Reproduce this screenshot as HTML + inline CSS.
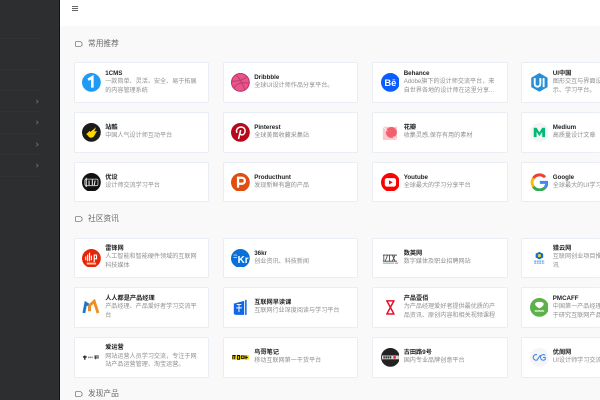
<!DOCTYPE html>
<html lang="zh"><head><meta charset="utf-8"><title>WebStack</title>
<style>
html,body{margin:0;padding:0;width:600px;height:400px;overflow:hidden;background:#f9f9f9}
body{font-family:"Liberation Sans","Noto Sans CJK SC",sans-serif}
#page{position:absolute;left:0;top:0;width:600px;height:400px;overflow:hidden;contain:paint}
#side{position:absolute;left:0;top:0;width:58.5px;height:400px;background:#2c2e2f;border-right:1px solid #141414}
#side i{position:absolute;left:0;width:40px;height:1px;background:#313334}
#side b{position:absolute;left:35px;width:2.2px;height:2.2px;border-top:.7px solid #666;border-right:.7px solid #666;transform:rotate(45deg)}
#head{position:absolute;left:59.5px;top:0;width:541px;height:26px;background:#fff}
#head i{position:absolute;left:12.5px;width:6px;height:.9px;background:#666}
.h{position:absolute;left:88px;font-size:7.7px;line-height:10px;color:#666;white-space:nowrap;filter:blur(.25px)}
.tag{position:absolute;left:75px;width:7.5px;height:6px}
.c{position:absolute;width:133.6px;height:38.6px;background:#fff;border:.7px solid #e9eef5;border-radius:1.5px;overflow:hidden}
.e{width:78px;border-right:0}
.ic{position:absolute;left:7.4px;top:10px;width:18.8px;height:18.8px;filter:blur(.25px)}
.t{position:absolute;left:30.5px;top:0;height:38.6px;display:flex;flex-direction:column;justify-content:center;white-space:nowrap;filter:blur(.28px)}
.t b{font-size:6.2px;line-height:8.2px;color:#1e2022;font-weight:bold}
.t span{font-size:6.1px;line-height:8.7px;color:#8f9090}
</style></head><body>
<div id="page">
<div id="side">
<i style="top:38px"></i><i style="top:69px"></i><i style="top:90px"></i><i style="top:111px"></i><i style="top:132.5px"></i><i style="top:154px"></i><i style="top:175.5px"></i>
<b style="top:99.5px"></b><b style="top:121px"></b><b style="top:142.5px"></b><b style="top:164px"></b>
</div>
<div id="head"><i style="top:5.6px"></i><i style="top:8px"></i><i style="top:10.4px"></i></div>

<svg class="tag" style="top:40.5px" viewBox="0 0 8 6"><path d="M1 .5H6L7.5 2V4.5L6 5.5H1A.7.7 0 0 1 .4 5V1A.7.7 0 0 1 1 .5Z" fill="none" stroke="#666" stroke-width=".7"/></svg>
<div class="h" style="top:38.5px">常用推荐</div>
<svg class="tag" style="top:215.5px" viewBox="0 0 8 6"><path d="M1 .5H6L7.5 2V4.5L6 5.5H1A.7.7 0 0 1 .4 5V1A.7.7 0 0 1 1 .5Z" fill="none" stroke="#666" stroke-width=".7"/></svg>
<div class="h" style="top:213.7px">社区资讯</div>
<svg class="tag" style="top:390.5px" viewBox="0 0 8 6"><path d="M1 .5H6L7.5 2V4.5L6 5.5H1A.7.7 0 0 1 .4 5V1A.7.7 0 0 1 1 .5Z" fill="none" stroke="#666" stroke-width=".7"/></svg>
<div class="h" style="top:388.5px">发现产品</div>

<!-- row 1 -->
<div class="c" style="left:73.7px;top:62.3px"><svg class="ic" viewBox="0 0 20 20"><circle cx="10" cy="10" r="10" fill="#1e9bf5"/><path d="M6.5 7.2L11 4.5V15.5" fill="none" stroke="#fff" stroke-width="2.8"/></svg><div class="t"><b>1CMS</b><span>一款简单、灵活、安全、易于拓展<br>的内容管理系统</span></div></div>
<div class="c" style="left:222.7px;top:62.3px"><svg class="ic" viewBox="0 0 20 20"><circle cx="10" cy="10" r="10" fill="#e5568a"/><circle cx="10" cy="10" r="9.4" fill="none" stroke="#c0306a" stroke-width="1"/><path d="M6 2.5C10 7 13 12 14.5 18M1 8.5C7 9 13 7.5 16.5 4M3 16C6 11 12 9.5 19.5 11" fill="none" stroke="#b8306a" stroke-width=".8"/></svg><div class="t"><b>Dribbble</b><span>全球UI设计师作品分享平台。</span></div></div>
<div class="c" style="left:372.2px;top:62.3px"><svg class="ic" viewBox="0 0 20 20"><circle cx="10" cy="10" r="10" fill="#0b5cff"/><text x="10" y="13.6" text-anchor="middle" font-size="10" font-weight="bold" fill="#fff" font-family="Liberation Sans">Bē</text></svg><div class="t"><b>Behance</b><span>Adobe旗下的设计师交流平台，来<br>自世界各地的设计师在这里分享...</span></div></div>
<div class="c e" style="left:521.3px;top:62.3px"><svg class="ic" viewBox="0 0 20 20"><path d="M10 0L18.7 5V15L10 20L1.3 15V5Z" fill="#2a8ed6"/><path d="M5 5.5V11.5C5 15.5 11 15.5 11 11.5V5.5M14.5 5.5V15" fill="none" stroke="#fff" stroke-width="2"/></svg><div class="t"><b>UI中国</b><span>图形交互与界面设计交流、作品展<br>示、学习平台。</span></div></div>

<!-- row 2 -->
<div class="c" style="left:73.7px;top:112px"><svg class="ic" viewBox="0 0 20 20"><circle cx="10" cy="10" r="10" fill="#1c1c1c"/><path d="M4.5 12L8 8.5L9 9.5L15 4.5L13 9L16 8.5L12.5 14.5C10 16.5 7 15.5 6.5 13.5Z" fill="#ffd800"/></svg><div class="t"><b>站酷</b><span>中国人气设计师互动平台</span></div></div>
<div class="c" style="left:222.7px;top:112px"><svg class="ic" viewBox="0 0 20 20"><circle cx="10" cy="10" r="10" fill="#b7081b"/><path d="M6.3 10.5C4.7 6.5 8 4.2 10.6 4.2C13.5 4.2 15.2 6.2 15 8.7C14.8 11.5 13 13 11.2 12.6C10.2 12.4 9.7 11.8 9.5 11.2M10.3 7.5L8 17" fill="none" stroke="#fff" stroke-width="1.6"/></svg><div class="t"><b>Pinterest</b><span>全球美图收藏采集站</span></div></div>
<div class="c" style="left:372.2px;top:112px"><svg class="ic" viewBox="0 0 20 20"><rect x="2" y="4" width="15" height="14" fill="#fbc9cd"/><circle cx="11" cy="10" r="5.8" fill="#f0606f"/><path d="M2 4L7 9M17 18L13 14" stroke="#fff" stroke-width=".6"/></svg><div class="t"><b>花瓣</b><span>收集灵感,保存有用的素材</span></div></div>
<div class="c e" style="left:521.3px;top:112px"><svg class="ic" viewBox="0 0 20 20"><circle cx="10" cy="10" r="10" fill="#f4f4f4"/><path d="M4 5H7L10 10L13 5H16V15H13V9.5L10 14L7 9.5V15H4Z" fill="#02b875"/></svg><div class="t"><b>Medium</b><span>高质量设计文章</span></div></div>

<!-- row 3 -->
<div class="c" style="left:73.7px;top:161.7px"><svg class="ic" viewBox="0 0 20 20"><circle cx="10" cy="10" r="10" fill="#111"/><rect x="3" y="6.5" width="14" height="7" rx="1.5" fill="none" stroke="#ddd" stroke-width=".8"/><path d="M4.5 5V15M7.5 8V13M11 7V13M14 8L13 13" stroke="#eee" stroke-width="1.1"/></svg><div class="t"><b>优设</b><span>设计师交流学习平台</span></div></div>
<div class="c" style="left:222.7px;top:161.7px"><svg class="ic" viewBox="0 0 20 20"><circle cx="10" cy="10" r="10" fill="#df4d0f"/><path d="M7.5 15.5V5H11.5A3.2 3.2 0 0 1 11.5 11.5H7.5" fill="none" stroke="#fff" stroke-width="2.4"/></svg><div class="t"><b>Producthunt</b><span>发现新鲜有趣的产品</span></div></div>
<div class="c" style="left:372.2px;top:161.7px"><svg class="ic" viewBox="0 0 20 20"><circle cx="10" cy="10" r="10" fill="#f00"/><rect x="4" y="5.5" width="12" height="9" rx="2.2" fill="#fff"/><path d="M8.5 7.7V12.3L12.5 10Z" fill="#f00"/></svg><div class="t"><b>Youtube</b><span>全球最大的学习分享平台</span></div></div>
<div class="c e" style="left:521.3px;top:161.7px"><svg class="ic" viewBox="0 0 20 20"><path d="M3.6 5.5A8 8 0 0 1 16 4.5" fill="none" stroke="#ea4335" stroke-width="3.2"/><path d="M3.6 5.5A8 8 0 0 0 3.6 14.5" fill="none" stroke="#fbbc05" stroke-width="3.2"/><path d="M3.6 14.5A8 8 0 0 0 16 15.5" fill="none" stroke="#34a853" stroke-width="3.2"/><path d="M16 15.5A8 8 0 0 0 18 10H10.5" fill="none" stroke="#4285f4" stroke-width="3.2"/></svg><div class="t"><b>Google</b><span>全球最大的UI学习分享平台</span></div></div>

<!-- row 4 -->
<div class="c" style="left:73.7px;top:237.7px"><svg class="ic" viewBox="0 0 20 20"><circle cx="10" cy="10" r="10" fill="#e6240b"/><path d="M4 8V12M6 6V13M8 4V13M10 7V12M13 6V14M13 6.5H15.5V10.5H13" fill="none" stroke="#fff" stroke-width="1.2"/><rect x="5" y="14.5" width="10" height="2" fill="#ffc9a8"/></svg><div class="t"><b>雷锋网</b><span>人工智能和智能硬件领域的互联网<br>科技媒体</span></div></div>
<div class="c" style="left:222.7px;top:237.7px"><svg class="ic" viewBox="0 0 20 20"><circle cx="10" cy="10" r="10" fill="#0a6fd6"/><text x="7" y="15" font-size="10.5" font-weight="bold" fill="#fff" font-family="Liberation Sans">Kr</text><path d="M2.8 6.5H6.5M2.8 9H6.5" stroke="#cde" stroke-width=".9"/></svg><div class="t"><b>36kr</b><span>创业资讯、科技新闻</span></div></div>
<div class="c" style="left:372.2px;top:237.7px"><svg class="ic" viewBox="0 0 20 20"><path d="M2 6.5H17M2 13H17M3 6.5V13M7 6.5L4.5 13M9 6.5V13M12 6.5L15 13M15 6.5L12 13" fill="none" stroke="#444" stroke-width=".9"/><path d="M2 15H14" stroke="#888" stroke-width=".9"/><path d="M15 15H18" stroke="#e5366e" stroke-width=".9"/></svg><div class="t"><b>数英网</b><span>数字媒体及职业招聘网站</span></div></div>
<div class="c e" style="left:521.3px;top:237.7px"><svg class="ic" viewBox="0 0 20 20"><path d="M10 3L14 5V9L10 11L6 9V5Z" fill="#0b6fd1"/><circle cx="10" cy="7" r="1.7" fill="#f8c91c"/><path d="M4.5 13H15.5M4.5 15H15.5" stroke="#6aa9e6" stroke-width="1.4" stroke-dasharray="2 .7"/></svg><div class="t"><b>猎云网</b><span>互联网创业项目推荐和创业创新资<br>讯</span></div></div>

<!-- row 5 -->
<div class="c" style="left:73.7px;top:287.3px"><svg class="ic" viewBox="0 0 20 20"><path d="M2 16L4 5.5L8 8L8 14" fill="none" stroke="#1b77c9" stroke-width="3"/><path d="M8 14V8L13 3.5L17 16" fill="none" stroke="#f28c1e" stroke-width="3"/></svg><div class="t"><b>人人都是产品经理</b><span>产品经理、产品爱好者学习交流平<br>台</span></div></div>
<div class="c" style="left:222.7px;top:287.3px"><svg class="ic" viewBox="0 0 20 20"><path d="M3 6L14 3V18H5L3 17Z" fill="#0f66e8"/><rect x="15" y="2" width="1.6" height="16" fill="#0f66e8"/><path d="M6 7H11M8.5 7V15M5.5 10.5H11.5" stroke="#fff" stroke-width="1"/></svg><div class="t"><b>互联网早读课</b><span>互联网行业深度阅读与学习平台</span></div></div>
<div class="c" style="left:372.2px;top:287.3px"><svg class="ic" viewBox="0 0 20 20"><path d="M5.5 3H14.5M5.5 17H14.5M6.5 3.5L13.5 16.5M13.5 3.5L6.5 16.5" fill="none" stroke="#e8112d" stroke-width="1.6"/></svg><div class="t"><b>产品壹佰</b><span>为产品经理爱好者提供最优质的产<br>品资讯、原创内容和相关视频课程</span></div></div>
<div class="c e" style="left:521.3px;top:287.3px"><svg class="ic" viewBox="0 0 20 20"><circle cx="10" cy="10" r="10" fill="#5db14a"/><path d="M10 11C6 9 4.5 6.5 6 5C7.5 3.8 12.5 3.8 14 5C15.5 6.5 14 9 10 11Z" fill="#fff"/><rect x="5" y="13" width="10" height="1.6" fill="#d8efd0"/></svg><div class="t"><b>PMCAFF</b><span>中国第一产品经理人气组织，专注<br>于研究互联网产品</span></div></div>

<!-- row 6 -->
<div class="c" style="left:73.7px;top:337px"><svg class="ic" viewBox="0 0 20 20"><path d="M1 9.5H5M3 8V12.5" stroke="#222" stroke-width="1.4"/><path d="M6.5 10H12" stroke="#777" stroke-width="1.6" stroke-dasharray="1.3 .5"/><path d="M13 8.5H18M14.5 8.5V12M13 10.5H18" stroke="#333" stroke-width="1"/></svg><div class="t"><b>爱运营</b><span>网站运营人员学习交流，专注于网<br>站产品运营管理、淘宝运营。</span></div></div>
<div class="c" style="left:222.7px;top:337px"><svg class="ic" viewBox="0 0 20 20"><rect x="1" y="7.5" width="18" height="5" fill="#ffe100"/><path d="M2 12V8H5M4 8V12M7 8H9V12H7ZM11 8.5H14V11H11ZM16 8V12M15 10H18" fill="none" stroke="#111" stroke-width="1.1"/></svg><div class="t"><b>鸟哥笔记</b><span>移动互联网第一干货平台</span></div></div>
<div class="c" style="left:372.2px;top:337px"><svg class="ic" viewBox="0 0 20 20"><circle cx="10" cy="10" r="10" fill="#222"/><rect x="1" y="8" width="18" height="4" fill="#ddd"/><path d="M2.5 10H11.5" stroke="#333" stroke-width="2.4" stroke-dasharray="1.6 .6"/><circle cx="14.5" cy="10" r="1.5" fill="#d33"/></svg><div class="t"><b>古田路9号</b><span>国内专业品牌创意平台</span></div></div>
<div class="c e" style="left:521.3px;top:337px"><svg class="ic" viewBox="0 0 20 20"><circle cx="10" cy="10" r="10" fill="#f5f5f5"/><path d="M7.5 7.2A3 3 0 1 0 7.5 12.8L11 7.6" fill="none" stroke="#3b82ee" stroke-width="1.1"/><path d="M16.2 7.8A3 3 0 1 0 16.2 12.2V10H13.8" fill="none" stroke="#3b82ee" stroke-width="1.1"/></svg><div class="t"><b>优阁网</b><span>UI设计师学习交流社区</span></div></div>
</div>
</body></html>
